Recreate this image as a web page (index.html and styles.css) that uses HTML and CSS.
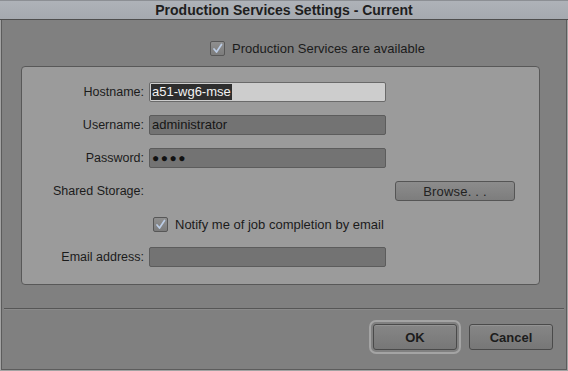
FILE: index.html
```html
<!DOCTYPE html>
<html>
<head>
<meta charset="utf-8">
<link rel="stylesheet" href="styles.css">
</head>
<body>
<div class="dialog">
  <div class="titlebar">Production Services Settings - Current</div>
  <div class="content">
    <div class="check top-check">
      <span class="box"><svg viewBox="0 0 15 15" width="15" height="15"><path d="M4 8 L6.5 11 L11.5 3.5" fill="none" stroke="#bccde6" stroke-width="1.7" stroke-linecap="round" stroke-linejoin="round"/></svg></span>
      <span>Production Services are available</span>
    </div>
    <div class="panel">
      <span class="lbl">Hostname:</span>
      <div class="field light"><span class="sel">a51-wg6-mse</span></div>
      <span></span>

      <span class="lbl">Username:</span>
      <div class="field">administrator</div>
      <span></span>

      <span class="lbl">Password:</span>
      <div class="field dots">●●●●</div>
      <span></span>

      <span class="lbl">Shared Storage:</span>
      <span></span>
      <button class="browse">Browse. . .</button>

      <span></span>
      <div class="check notify">
        <span class="box"><svg viewBox="0 0 15 15" width="15" height="15"><path d="M4 8 L6.5 11 L11.5 3.5" fill="none" stroke="#bccde6" stroke-width="1.7" stroke-linecap="round" stroke-linejoin="round"/></svg></span>
        <span>Notify me of job completion by email</span>
      </div>
      <span></span>

      <span class="lbl">Email address:</span>
      <div class="field"></div>
      <span></span>
    </div>
    <div class="sep"></div>
    <div class="buttons">
      <button class="btn default">OK</button>
      <button class="btn">Cancel</button>
    </div>
  </div>
</div>
</body>
</html>
```

FILE: styles.css
```css
html, body {
  margin: 0;
  padding: 0;
}
body {
  background: #7f7f7f;
  font-family: "Liberation Sans", Arial, sans-serif;
  font-size: 13px;
  color: #1b1b1b;
}
.dialog {
  width: 568px;
  height: 371px;
  display: flex;
  flex-direction: column;
  box-sizing: border-box;
  background: #808080;
}
.titlebar {
  box-sizing: border-box;
  height: 20px;
  line-height: 18px;
  text-align: center;
  font-weight: bold;
  font-size: 14px;
  color: #1e1e1e;
  background: linear-gradient(#aeb2b8, #a5a9af);
  border-top: 1px solid #8c8f94;
  border-bottom: 1px solid #4e4e4e;
}
.content {
  flex: 1;
  display: flex;
  flex-direction: column;
  border-left: 1px solid #a3a3a3;
  border-right: 1px solid #a3a3a3;
  border-bottom: 1px solid #a3a3a3;
  box-shadow: inset 1px 0 0 #5c5c5c, inset -1px 0 0 #5c5c5c, inset 0 -1px 0 #5c5c5c;
  padding-top: 21px;
}
.check {
  display: flex;
  align-items: center;
  gap: 7px;
  height: 15px;
}
.box {
  width: 15px;
  height: 15px;
  box-sizing: border-box;
  border: 1px solid #575757;
  border-radius: 2px;
  background: linear-gradient(#8f8f8f, #7c7c7c);
  display: flex;
}
.box svg {
  margin: -1px;
}
.top-check {
  margin-left: 209px;
  margin-bottom: 10px;
}
.panel {
  margin-left: 20px;
  width: 519px;
  box-sizing: border-box;
  background: #9b9b9b;
  border: 1px solid #585858;
  border-radius: 4px;
  padding: 15px 0 17px 0;
  display: grid;
  grid-template-columns: 127px 237px 120px;
  grid-auto-rows: 20px;
  row-gap: 13px;
  align-items: center;
}
.lbl {
  text-align: right;
  padding-right: 5px;
  white-space: nowrap;
  font-size: 12.5px;
}
.field {
  height: 20px;
  box-sizing: border-box;
  border: 1px solid #5c5c5c;
  border-radius: 2px;
  background: #737373;
  padding: 0 2px;
  line-height: 18px;
  color: #161616;
}
.field.light {
  background: #cdcdcd;
  border-color: #6a6a6a;
  padding: 1px 1px;
  line-height: 16px;
}
.sel {
  display: inline-block;
  background: #2e2e2e;
  color: #f2f2f2;
  padding: 0 1px;
  height: 16px;
}
.dots {
  font-size: 12px;
  letter-spacing: 1.5px;
  padding-left: 2px;
  color: #111;
}
.browse {
  margin-left: 9px;
  width: 120px;
  height: 20px;
  font-family: inherit;
  font-size: 13px;
  letter-spacing: 0.2px;
  color: #222;
  background: linear-gradient(#8c8c8c, #7d7d7d);
  border: 1px solid #555;
  border-radius: 3px;
  padding: 0;
}
.notify {
  margin-left: 4px;
  white-space: nowrap;
}
.sep {
  margin: 23px 3px 0 3px;
  height: 1px;
  background: #565656;
  box-shadow: 0 1px 0 #8a8a8a;
}
.buttons {
  display: flex;
  justify-content: flex-end;
  gap: 12px;
  padding: 15px 14px 0 0;
}
.btn {
  width: 84px;
  height: 26px;
  font-family: inherit;
  font-size: 13px;
  font-weight: bold;
  color: #1c1c1c;
  background: linear-gradient(#868686, #777777);
  border: 1px solid #4a4a4a;
  border-radius: 3px;
  box-shadow: inset 0 1px 0 #939393;
  padding: 0;
}
.btn.default {
  outline: 2px solid #a4a4a4;
  outline-offset: 2px;
}
```
